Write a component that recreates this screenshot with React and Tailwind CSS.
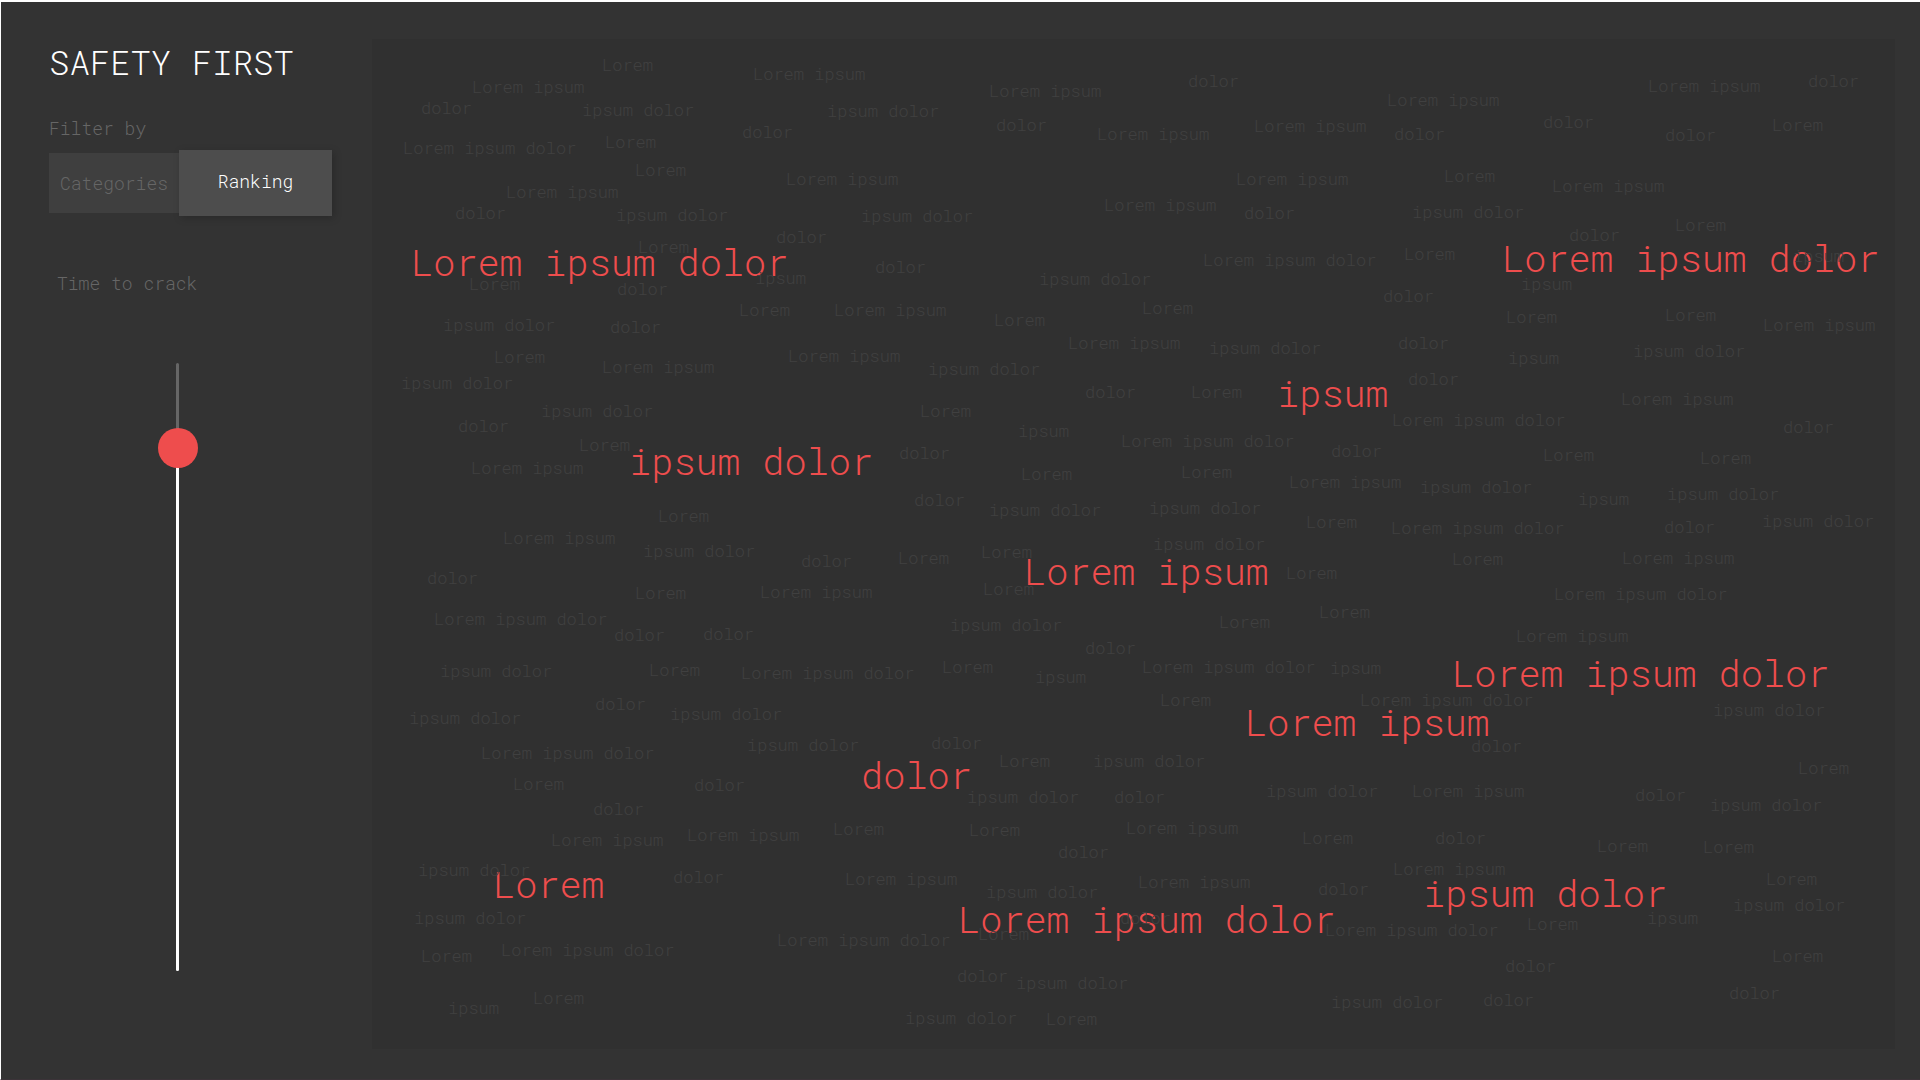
import { useState } from "react";

const MAP_WIDTH = 1523;
const MAP_HEIGHT = 1010;

const L = "Lorem";
const I = "ipsum";
const D = "dolor";
const LI = "Lorem ipsum";
const ID = "ipsum dolor";
const LID = "Lorem ipsum dolor";

// [text, x, y]: left edge and vertical centre on the map
const highlighted = [
  [LID, 43, 223], [LID, 1134, 219], [ID, 261, 422], [I, 909, 354],
  [LI, 656, 532], [LI, 877, 683], [LID, 1084, 634], [D, 493, 736],
  [L, 125, 845], [LID, 590, 880], [ID, 1055, 854],
];

const faded = [
  [L, 231, 27], [LI, 382, 36], [LI, 101, 49], [D, 50, 70], [ID, 211, 72],
  [ID, 456, 73], [D, 371, 94], [LID, 32, 110], [L, 234, 104], [L, 264, 132],
  [LI, 415, 141], [LI, 135, 154], [D, 84, 175], [ID, 245, 177], [ID, 490, 178],
  [D, 405, 199], [L, 267, 209], [L, 98, 246], [D, 246, 251], [I, 384, 240],
  [D, 504, 229], [ID, 72, 287], [D, 239, 289], [L, 368, 272], [LI, 463, 272],
  [L, 123, 319], [LI, 231, 329], [LI, 417, 318],
  [LI, 618, 53], [D, 817, 43], [D, 625, 87], [LI, 726, 96], [LI, 883, 88],
  [LI, 865, 141], [LI, 733, 167], [D, 873, 175], [LID, 832, 222], [ID, 668, 241],
  [L, 771, 270], [L, 623, 282], [LI, 697, 305], [ID, 838, 310], [ID, 557, 331],
  [LI, 1016, 62], [LI, 1277, 48], [D, 1437, 43], [D, 1172, 84], [D, 1023, 96],
  [D, 1294, 97], [L, 1401, 87], [L, 1073, 138], [LI, 1181, 148], [ID, 1041, 174],
  [D, 1198, 197], [L, 1304, 187], [I, 1422, 218], [L, 1033, 216], [I, 1150, 246],
  [D, 1012, 258], [L, 1135, 279], [L, 1294, 277], [LI, 1392, 287], [D, 1027, 305],
  [I, 1137, 320], [ID, 1262, 313], [D, 1037, 341],
  [ID, 30, 345], [ID, 170, 373], [D, 87, 388], [L, 208, 407], [LI, 100, 430],
  [L, 287, 478], [LI, 132, 500], [ID, 272, 513], [D, 430, 523], [D, 56, 540],
  [L, 264, 555], [LI, 389, 554], [LID, 63, 581], [D, 243, 597], [D, 332, 596],
  [ID, 69, 633], [L, 278, 632], [LID, 370, 635], [D, 224, 666], [ID, 299, 676],
  [ID, 38, 680],
  [D, 714, 354], [L, 820, 354], [L, 549, 373], [I, 647, 393], [LID, 750, 403],
  [D, 960, 413], [D, 528, 415], [L, 650, 436], [L, 810, 434], [LI, 918, 444],
  [D, 543, 462], [ID, 618, 472], [ID, 778, 470], [L, 935, 484], [ID, 782, 506],
  [L, 527, 520], [L, 610, 514], [L, 915, 535], [L, 612, 551], [ID, 579, 587],
  [L, 848, 584], [L, 948, 574], [D, 714, 610], [L, 571, 629], [LID, 771, 629],
  [I, 959, 630], [I, 664, 639], [L, 789, 662], [LID, 989, 662],
  [LI, 1250, 361], [LID, 1021, 382], [D, 1412, 389], [L, 1172, 417], [L, 1329, 420],
  [ID, 1049, 449], [I, 1207, 461], [ID, 1296, 456], [LID, 1020, 490], [D, 1293, 489],
  [ID, 1391, 483], [L, 1081, 521], [LI, 1251, 520], [LID, 1183, 556], [LI, 1145, 598],
  [ID, 1342, 672],
  [LID, 110, 715], [ID, 376, 707], [L, 142, 746], [D, 323, 747], [D, 222, 771],
  [LI, 180, 802], [LI, 316, 797], [L, 462, 791], [ID, 47, 832], [D, 302, 839],
  [LI, 474, 841], [ID, 43, 880], [L, 50, 918], [LID, 130, 912], [LID, 406, 902],
  [L, 162, 960], [I, 77, 970],
  [D, 560, 705], [L, 628, 723], [ID, 722, 723], [ID, 596, 759], [D, 743, 759],
  [ID, 895, 753], [L, 598, 792], [LI, 755, 790], [L, 931, 800], [D, 687, 814],
  [ID, 615, 854], [LI, 767, 844], [D, 947, 851], [L, 607, 896], [D, 749, 880],
  [LID, 954, 892], [D, 586, 938], [ID, 645, 945], [ID, 534, 980], [L, 675, 981],
  [ID, 960, 964],
  [D, 1100, 708], [L, 1427, 730], [LI, 1041, 753], [D, 1264, 757], [ID, 1339, 767],
  [D, 1064, 800], [L, 1226, 808], [L, 1332, 809], [LI, 1022, 831], [L, 1395, 841],
  [ID, 1362, 867], [L, 1156, 886], [I, 1276, 880], [D, 1134, 928], [L, 1401, 918],
  [D, 1112, 962], [D, 1358, 955],
];

function Word({ word, className }) {
  const [text, x, y] = word;
  return (
    <span
      className={`absolute -translate-y-1/2 whitespace-nowrap ${className}`}
      style={{ left: `${(x / MAP_WIDTH) * 100}%`, top: `${(y / MAP_HEIGHT) * 100}%` }}
    >
      {text}
    </span>
  );
}

function CrackTimeSlider() {
  const [value, setValue] = useState(886);
  return (
    <div className="grid w-10 flex-1 self-center">
      <div className="flex w-[3px] flex-col justify-self-center overflow-hidden rounded-full bg-[#666666] [grid-area:1/1]">
        <div className="mt-auto bg-white" style={{ height: `${value / 10}%` }} />
      </div>
      <input
        id="crack-time"
        type="range"
        min="0"
        max="1000"
        value={value}
        onChange={(e) => setValue(Number(e.target.value))}
        className="z-10 h-full w-10 cursor-pointer appearance-none bg-transparent [direction:rtl] [grid-area:1/1] [writing-mode:vertical-lr] [&::-webkit-slider-thumb]:size-10 [&::-webkit-slider-thumb]:appearance-none [&::-webkit-slider-thumb]:rounded-full [&::-webkit-slider-thumb]:bg-[#ee4d4d]"
      />
    </div>
  );
}

export default function App() {
  const [filter, setFilter] = useState("ranking");
  const active = "z-10 h-[66px] flex-1 bg-[#4d4d4d] pb-1 text-white shadow-[2px_2px_8px_rgba(0,0,0,0.2)]";
  const inactive = "h-[60px] w-[130px] bg-[#3f3f3f] text-[#666666]";
  return (
    <div className="flex min-h-screen border-t-2 border-b border-l border-t-white border-b-[#3b3338] border-l-white bg-[#333333] font-['Roboto_Mono','Liberation_Mono',monospace] font-light">
      <aside className="flex w-[371px] shrink-0 flex-col pr-10 pb-[108px] pl-12 text-[18px] leading-6 text-[#666666]">
        <h1 className="mt-10 text-[34px] leading-10 whitespace-nowrap text-white">SAFETY FIRST</h1>
        <p id="filter-label" className="mt-[34px]">Filter by</p>
        <div role="group" aria-labelledby="filter-label" className="mt-[10px] flex items-center">
          <button type="button" onClick={() => setFilter("categories")} className={filter === "categories" ? active : inactive}>
            Categories
          </button>
          <button type="button" onClick={() => setFilter("ranking")} className={filter === "ranking" ? active : inactive}>
            Ranking
          </button>
        </div>
        <label htmlFor="crack-time" className="mt-[55px] mb-[68px] ml-2">Time to crack</label>
        <div className="-ml-[26px] flex flex-1 flex-col">
          <CrackTimeSlider />
        </div>
      </aside>
      <main className="relative mt-[37px] mr-[25px] mb-[30px] flex-1 overflow-hidden bg-[#303030]">
        {highlighted.map((word, i) => (
          <Word key={i} word={word} className="-ml-1 text-[37px] leading-10 text-[#ee4d4d]" />
        ))}
        {faded.map((word, i) => (
          <Word key={i} word={word} className="-ml-px -mt-px text-[17px] leading-5 text-[#404040]" />
        ))}
      </main>
    </div>
  );
}
